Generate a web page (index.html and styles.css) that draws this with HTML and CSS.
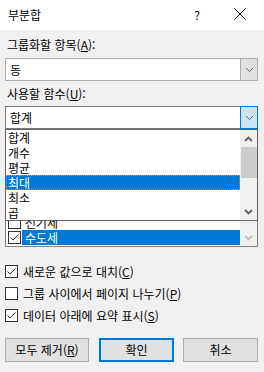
FILE: index.html
```html
<!DOCTYPE html>
<html lang="ko">
<head>
<meta charset="utf-8">
<link rel="stylesheet" href="styles.css">
</head>
<body>
<div class="dialog">
  <div class="titlebar">
    <span class="title">부분합</span>
    <span class="help">?</span>
    <svg class="close" width="12" height="12" viewBox="0 0 12 12"><path d="M0.5 0.5L11.5 11.5M11.5 0.5L0.5 11.5" stroke="#000" stroke-width="1"/></svg>
  </div>
  <div class="content">
    <div class="label">그룹화할 항목(<u>A</u>):</div>
    <div class="combo combo-idle">
      <span class="combo-text">동</span>
      <span class="combo-btn"><svg width="7" height="4" viewBox="0 0 7 4"><path d="M0.3 0.3L3.5 3.5L6.7 0.3" fill="none" stroke="#606060" stroke-width="1"/></svg></span>
    </div>
    <div class="label">사용할 함수(<u>U</u>):</div>
    <div class="combo-wrap">
      <div class="combo combo-open">
        <span class="combo-text">합계</span>
        <span class="combo-btn"><svg width="7" height="4" viewBox="0 0 7 4"><path d="M0.3 0.3L3.5 3.5L6.7 0.3" fill="none" stroke="#606060" stroke-width="1"/></svg></span>
      </div>
      <div class="dropdown">
        <ul class="dd-items">
          <li>합계</li>
          <li>개수</li>
          <li>평균</li>
          <li class="dd-sel">최대</li>
          <li>최소</li>
          <li>곱</li>
        </ul>
        <div class="sbar">
          <span class="sb-arrow"><svg width="9" height="6" viewBox="0 0 9 6"><path d="M1 5L4.5 1.5L8 5" fill="none" stroke="#606060" stroke-width="1.8"/></svg></span>
          <span class="sb-thumb"></span>
          <span class="sb-track"></span>
          <span class="sb-arrow"><svg width="9" height="6" viewBox="0 0 9 6"><path d="M1 1L4.5 4.5L8 1" fill="none" stroke="#606060" stroke-width="1.8"/></svg></span>
        </div>
      </div>
    </div>
    <div class="label-spacer"></div>
    <div class="listbox">
      <div class="lb-items">
        <div class="lb-row"><span class="cb"></span><span class="lb-text">전기세</span></div>
        <div class="lb-row lb-sel"><span class="cb"><svg width="11" height="11" viewBox="0 0 11 11"><path d="M1.5 5.5L4 8L9.5 2.5" fill="none" stroke="#333" stroke-width="1"/></svg></span><span class="lb-text">수도세</span></div>
      </div>
      <div class="sbar sbar-lb">
        <span class="sb-track"></span>
        <span class="sb-arrow"><svg width="9" height="6" viewBox="0 0 9 6"><path d="M1 1L4.5 4.5L8 1" fill="none" stroke="#bfbfbf" stroke-width="1.8"/></svg></span>
      </div>
    </div>
    <div class="checks">
      <div class="check-row"><span class="cb"><svg width="11" height="11" viewBox="0 0 11 11"><path d="M1.5 5.5L4 8L9.5 2.5" fill="none" stroke="#333" stroke-width="1"/></svg></span><span>새로운 값으로 대치(<u>C</u>)</span></div>
      <div class="check-row"><span class="cb"></span><span>그룹 사이에서 페이지 나누기(<u>P</u>)</span></div>
      <div class="check-row"><span class="cb"><svg width="11" height="11" viewBox="0 0 11 11"><path d="M1.5 5.5L4 8L9.5 2.5" fill="none" stroke="#333" stroke-width="1"/></svg></span><span>데이터 아래에 요약 표시(<u>S</u>)</span></div>
    </div>
    <div class="buttons">
      <button class="btn btn-wide">모두 제거(<u>R</u>)</button>
      <button class="btn btn-default">확인</button>
      <button class="btn">취소</button>
    </div>
  </div>
</div>
</body>
</html>
```

FILE: styles.css
```css
* { box-sizing: border-box; }
html, body {
  margin: 0;
  padding: 0;
}
body {
  width: 264px;
  height: 372px;
  overflow: hidden;
  background: #f0f0f0;
  font-family: "Noto Sans CJK KR", "Noto Sans", sans-serif;
  font-size: 12px;
  color: #000;
}
u { text-decoration: underline; text-underline-offset: 1px; }

.titlebar {
  height: 30px;
  background: #fff;
  display: flex;
  align-items: center;
  padding: 0 18px 2px 8px;
}
.title { flex: 1; line-height: 15px; }
.help { width: 14px; text-align: center; margin-right: 30px; line-height: 15px; }
.close { display: block; }

.content { padding: 0 6px 0 5px; }

.label {
  height: 15px;
  line-height: 15px;
  padding-left: 2px;
  margin-top: 5px;
  white-space: nowrap;
}
.titlebar + .content .label:first-child { margin-top: 7px; }
.label-spacer { height: 15px; margin-top: 5px; }

.combo {
  height: 23px;
  margin-top: 6px;
  display: flex;
  background: #fff;
}
.combo-idle { border: 1px solid #adadad; }
.combo-text {
  flex: 1;
  line-height: 21px;
  padding-left: 4px;
}
.combo-btn {
  width: 17px;
  display: flex;
  align-items: center;
  justify-content: center;
}
.combo-btn svg { display: block; }
.combo-idle .combo-btn {
  background: #e1e1e1;
  border-left: 1px solid #adadad;
}

.combo-wrap { position: relative; margin-top: 5px; }
.combo-wrap .combo { margin-top: 0; }
.combo-open {
  border: 1px solid #7a7a7a;
  border-right: none;
}
.combo-open .combo-btn {
  width: 18px;
  margin: -1px 0;
  background: #cce4f7;
  border: 1px solid #0078d7;
}

.dropdown {
  position: absolute;
  left: 0;
  top: 23px;
  width: 253px;
  height: 92px;
  border: 1px solid #646464;
  background: #fff;
  display: flex;
  z-index: 5;
}
.dd-items {
  list-style: none;
  margin: 0;
  padding: 0;
  flex: 1;
  overflow: hidden;
}
.dd-items li {
  height: 15px;
  line-height: 15px;
  padding-left: 2px;
}
.dd-items li.dd-sel {
  background: #0078d7;
  color: #fff;
  outline: 1px dotted #f08a2c;
  outline-offset: -1px;
}

.sbar {
  width: 17px;
  background: #f0f0f0;
  display: flex;
  flex-direction: column;
}
.sb-arrow {
  height: 17px;
  display: flex;
  align-items: center;
  justify-content: center;
}
.sb-arrow svg { display: block; }
.sb-thumb {
  height: 31px;
  margin: 0 0 0 1px;
  background: #cdcdcd;
}
.sb-track { flex: 1; }

.listbox {
  margin-top: 3px;
  height: 95px;
  border: 1px solid #828282;
  background: #fff;
  display: flex;
}
.lb-items {
  flex: 1;
  display: flex;
  flex-direction: column;
  justify-content: flex-end;
  padding-bottom: 1px;
}
.lb-row {
  height: 15px;
  display: flex;
  align-items: center;
  padding-left: 2px;
}
.lb-row .cb { margin-right: 1px; }
.lb-text {
  flex: 1;
  height: 15px;
  line-height: 15px;
  padding-left: 3px;
}
.lb-sel .lb-text { background: #0078d7; color: #fff; }

.cb {
  width: 13px;
  height: 13px;
  border: 1px solid #333;
  background: #fff;
  display: flex;
  align-items: center;
  justify-content: center;
  flex: none;
}
.cb svg { display: block; }

.checks { margin-top: 13px; }
.check-row {
  height: 22px;
  display: flex;
  align-items: center;
  gap: 5px;
  white-space: nowrap;
  line-height: 15px;
}

.buttons {
  margin-top: 12px;
  display: flex;
}
.btn {
  height: 24px;
  width: 75px;
  padding: 0;
  margin: 0 0 0 9px;
  background: #e1e1e1;
  border: 1px solid #adadad;
  font-family: inherit;
  font-size: 12px;
  color: #000;
  line-height: 20px;
}
.btn-wide { width: 84px; margin-left: 0; }
.btn-default { border: 2px solid #0078d7; margin-left: 10px; }
```
